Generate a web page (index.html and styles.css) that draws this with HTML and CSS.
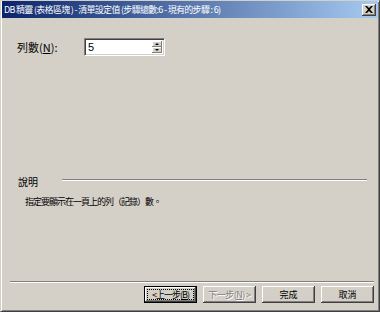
FILE: index.html
```html
<!DOCTYPE html>
<html lang="zh-Hant">
<head>
    <meta charset="UTF-8">
    <title>DB 精靈</title>
    <link rel="stylesheet" href="styles.css">
</head>
<body>
    <div class="window">
        <div class="title-bar">
            <span class="title-text">DB 精靈 (表格區塊 ) - 清單設定值 (步驟總數:6 - 現有的步驟 : 6)</span>
            <button class="close-btn">
                <svg width="8" height="7" viewBox="0 0 8 7">
                    <path d="M0 0h2l2 2 2-2h2L5 3.5 8 7H6L4 5 2 7H0l3-3.5z" fill="#000"/>
                </svg>
            </button>
        </div>
        <div class="content">
            <div class="field-row">
                <label class="field-label">列數(<u>N</u>):</label>
                <div class="spinner">
                    <input class="spin-input" type="text" value="5">
                    <div class="spin-btns">
                        <span class="spin-btn"><span class="arrow-up"></span></span>
                        <span class="spin-btn"><span class="arrow-down"></span></span>
                    </div>
                </div>
            </div>
            <div class="desc-section">
                <div class="desc-head">
                    <span>說明</span>
                    <span class="etched"></span>
                </div>
                <p class="desc-text">指定要顯示在一頁上的列（記錄）數。</p>
            </div>
        </div>
        <div class="footer">
            <div class="etched footer-line"></div>
            <div class="btn-row">
                <button class="btn btn-default"><span class="focus-rect">&lt;上一步(<u>B</u>)</span></button>
                <button class="btn btn-disabled" disabled>下一步(<u>N</u>) &gt;</button>
                <button class="btn">完成</button>
                <button class="btn">取消</button>
            </div>
        </div>
    </div>
</body>
</html>
```

FILE: styles.css
```css
body {
    margin: 0;
    font-family: "Noto Sans CJK TC", "Liberation Sans", sans-serif;
    font-size: 10px;
    background-color: #d4d0c8;
}
.window {
    width: 380px;
    height: 312px;
    box-sizing: border-box;
    background-color: #d4d0c8;
    border-left: 1px solid #d4d0c8;
    border-top: 1px solid #d4d0c8;
    border-right: 1px solid #404040;
    border-bottom: 1px solid #404040;
    box-shadow: inset 1px 1px 0 #fff, inset -1px -1px 0 #808080;
    display: flex;
    flex-direction: column;
}
.title-bar {
    height: 17px;
    margin: 0 1px 0 1px;
    background: linear-gradient(to right, #0a246a, #a6caf0);
    display: flex;
    align-items: center;
    justify-content: space-between;
    padding: 0 2px 0 2px;
}
.title-text {
    color: #fff;
    font-size: 9px;
    letter-spacing: -0.7px;
    line-height: 17px;
    white-space: nowrap;
}
.close-btn {
    width: 14px;
    height: 12px;
    padding: 0;
    background-color: #d4d0c8;
    border: none;
    box-shadow: inset -1px -1px 0 #404040, inset 1px 1px 0 #fff, inset -2px -2px 0 #808080;
    display: flex;
    align-items: center;
    justify-content: center;
}
.content {
    flex: 1;
    padding: 0 12px 0 16px;
}
.field-row {
    display: flex;
    align-items: center;
    margin-top: 20px;
}
.field-label {
    width: 67px;
    font-size: 11px;
    color: #000;
}
.spinner {
    width: 81px;
    height: 18px;
    box-sizing: border-box;
    background-color: #fff;
    border-top: 1px solid #808080;
    border-left: 1px solid #808080;
    border-right: 1px solid #fff;
    border-bottom: 1px solid #fff;
    box-shadow: inset 1px 1px 0 #404040, inset -1px -1px 0 #d4d0c8;
    display: flex;
    padding: 2px;
}
.spin-input {
    flex: 1;
    min-width: 0;
    border: none;
    outline: none;
    padding: 0 0 0 1px;
    font-family: "Liberation Sans", sans-serif;
    font-size: 11px;
    background: transparent;
}
.spin-btns {
    width: 10px;
    display: flex;
    flex-direction: column;
}
.spin-btn {
    flex: 1;
    background-color: #d4d0c8;
    box-shadow: inset -1px -1px 0 #808080, inset 1px 1px 0 #fff;
    display: flex;
    align-items: center;
    justify-content: center;
}
.arrow-up {
    border-left: 2px solid transparent;
    border-right: 2px solid transparent;
    border-bottom: 2px solid #000;
}
.arrow-down {
    border-left: 2px solid transparent;
    border-right: 2px solid transparent;
    border-top: 2px solid #000;
}
.desc-section {
    margin-top: 118px;
}
.desc-head {
    display: flex;
    align-items: center;
    gap: 24px;
    padding-left: 1px;
}
.desc-head .etched {
    flex: 1;
    margin-top: -3px;
}
.etched {
    height: 0;
    border-top: 1px solid #808080;
    border-bottom: 1px solid #fff;
}
.desc-text {
    margin: 6px 0 0 8px;
    font-size: 9px;
    letter-spacing: -1px;
}
.footer {
    padding: 0 5px 8px 9px;
}
.footer-line {
    margin-bottom: 3px;
}
.btn-row {
    display: flex;
    justify-content: flex-end;
    gap: 6px;
}
.btn {
    width: 53px;
    height: 17px;
    padding: 0;
    font-family: "Noto Sans CJK TC", "Liberation Sans", sans-serif;
    font-size: 9px;
    line-height: 15px;
    white-space: nowrap;
    color: #000;
    background-color: #d4d0c8;
    border: none;
    box-shadow: inset -1px -1px 0 #404040, inset 1px 1px 0 #fff, inset -2px -2px 0 #808080;
}
.btn-default {
    border: 1px solid #000;
    box-sizing: border-box;
    padding: 2px 2px;
}
.focus-rect {
    display: block;
    border: 1px dotted #000;
    line-height: 9px;
    letter-spacing: -1px;
}
.btn-disabled {
    color: #808080;
    text-shadow: 1px 1px 0 #fff;
    letter-spacing: -0.5px;
}
```
